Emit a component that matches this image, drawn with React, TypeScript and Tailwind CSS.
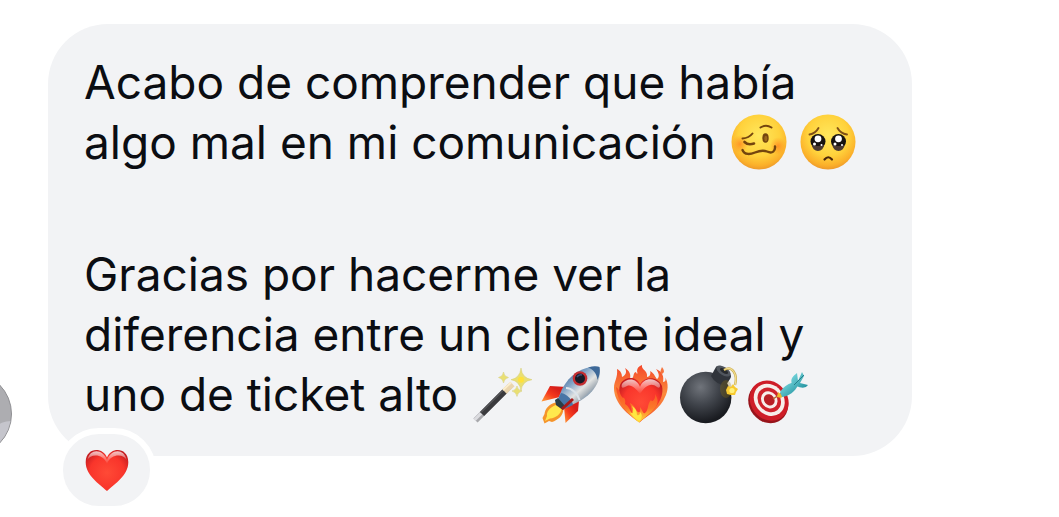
import type { ReactNode } from "react";

interface EmojiProps {
  label: string;
  children: ReactNode;
}

// Base de cada emoji
function Emoji({ label, children }: EmojiProps) {
  return (
    <svg
      role="img"
      aria-label={label}
      viewBox="0 0 60 60"
      className="size-15 shrink-0 overflow-visible"
      fill="none"
    >
      {children}
    </svg>
  );
}

// Degradados compartidos
function Gradients() {
  return (
    <svg className="absolute size-0" aria-hidden="true">
      <defs>
        <radialGradient id="face" cx="0.5" cy="0.38" r="0.62">
          <stop offset="0" stopColor="#ffe75c" />
          <stop offset="0.6" stopColor="#ffd23c" />
          <stop offset="0.88" stopColor="#fbb02a" />
          <stop offset="1" stopColor="#ee9a2b" />
        </radialGradient>
        <radialGradient id="blush">
          <stop offset="0" stopColor="#ff7a1c" stopOpacity="0.7" />
          <stop offset="1" stopColor="#ff8a1c" stopOpacity="0" />
        </radialGradient>
        <radialGradient id="heart" cx="0.5" cy="0.55" r="0.62">
          <stop offset="0" stopColor="#ff4a36" />
          <stop offset="0.65" stopColor="#f9352b" />
          <stop offset="1" stopColor="#c41c20" />
        </radialGradient>
        <linearGradient id="shine" x1="0" y1="0" x2="0" y2="1">
          <stop offset="0" stopColor="#fff" stopOpacity="0.75" />
          <stop offset="1" stopColor="#fff" stopOpacity="0" />
        </linearGradient>
        <linearGradient id="flame" x1="0" y1="0" x2="0" y2="1">
          <stop offset="0" stopColor="#f4472a" />
          <stop offset="0.5" stopColor="#fb8a3c" />
          <stop offset="1" stopColor="#f5542d" />
        </linearGradient>
        <linearGradient id="fire" x1="0" y1="0" x2="0" y2="1">
          <stop offset="0" stopColor="#f94a24" />
          <stop offset="0.6" stopColor="#fb7a2a" />
          <stop offset="1" stopColor="#ffe13f" />
        </linearGradient>
        <linearGradient id="fin" x1="1" y1="0" x2="0" y2="1">
          <stop offset="0.3" stopColor="#d81f1a" />
          <stop offset="0.6" stopColor="#f6391d" />
          <stop offset="1" stopColor="#ffa13a" />
        </linearGradient>
        <linearGradient id="hull" x1="0.2" y1="0.2" x2="0.75" y2="0.8">
          <stop offset="0" stopColor="#486f9d" />
          <stop offset="0.3" stopColor="#82a4c6" />
          <stop offset="0.6" stopColor="#e2e3e2" />
          <stop offset="0.8" stopColor="#a7b0b8" />
          <stop offset="1" stopColor="#4f7ba8" />
        </linearGradient>
        <radialGradient id="bomb" cx="0.4" cy="0.3" r="0.68">
          <stop offset="0" stopColor="#70747b" />
          <stop offset="0.5" stopColor="#41454c" />
          <stop offset="1" stopColor="#191b20" />
        </radialGradient>
        <linearGradient id="dart" x1="0" y1="0" x2="1" y2="1">
          <stop offset="0" stopColor="#7fdde3" />
          <stop offset="1" stopColor="#1f8f9c" />
        </linearGradient>
      </defs>
    </svg>
  );
}

function WoozyFace() {
  return (
    <Emoji label="Cara de grogui">
      <circle cx="30" cy="30" r="27.5" fill="url(#face)" />
      <ellipse cx="49" cy="34" rx="8" ry="9" fill="url(#blush)" />
      <ellipse cx="11" cy="32" rx="8" ry="9" fill="url(#blush)" />
      <g stroke="#74450e" strokeWidth="2" strokeLinecap="round" strokeLinejoin="round">
        <path d="M13.5 26.5Q20 26 23.5 21.5" />
        <path d="M15.5 30Q19 33.5 25 31.5" strokeWidth="2.6" />
        <path d="M31.5 15.5Q37 12 42.5 15.5" />
        <path d="M13.5 38C15.5 43 21 42.5 26 40.5C32 38 34.5 38 38 39.5C43.5 42 46.5 39 46 34.5" strokeWidth="2.4" />
      </g>
      <ellipse cx="36.5" cy="26" rx="3.2" ry="4.7" fill="#74450e" />
      <ellipse cx="36.8" cy="26.5" rx="1.5" ry="2.8" fill="#9a671c" />
    </Emoji>
  );
}

function PleadingFace() {
  return (
    <Emoji label="Cara de súplica">
      <circle cx="30" cy="30" r="27.5" fill="url(#face)" />
      <g stroke="#805017" strokeWidth="1.9" strokeLinecap="round">
        <path d="M11.5 22.5Q17.5 21.5 20.5 16" />
        <path d="M49 22.5Q42.5 21.5 39.5 16" />
        <path d="M26.5 47.5Q30.3 43 34 47.5" stroke="#4a2508" strokeWidth="2.2" />
      </g>
      {[20, 40.5].map((x) => (
        <g key={x}>
          <circle cx={x} cy="29.5" r="7.5" fill="#171311" />
          <path d={`M${x - 6} 33a6 6 0 0 0 12 0q-6 2-12 0z`} fill="#4b3a32" />
          <circle cx={x} cy="26.8" r="3.4" fill="#fff" />
          <circle cx={x - 3.5} cy="32" r="1.5" fill="#fff" />
          <circle cx={x + 3.5} cy="33" r="1" fill="#fff" />
        </g>
      ))}
    </Emoji>
  );
}

function MagicWand() {
  return (
    <Emoji label="Varita mágica">
      <path d="M4.5 56.5L39.5 21.5" stroke="#a8a8ac" strokeWidth="6" />
      <path d="M3.5 56L12 47.5" stroke="#dcdce0" strokeWidth="3" />
      <path d="M11 50L34 27" stroke="#3a3a3d" strokeWidth="6" />
      <path d="M10 48.5L33 25.5" stroke="#68686b" strokeWidth="1" />
      <path d="M33.5 27.5L41.5 20" stroke="#ead5ad" strokeWidth="6" />
      <path d="M32 26L40 18.5" stroke="#fbedcc" strokeWidth="2" />
      <g fill="#e9df72" stroke="#d5cc76" strokeWidth="0.5">
        <path d="M50 4Q51 14.2 61 15.7Q51 17 50 27Q48.8 17 40 15.7Q48.8 14.2 50 4Z" />
        <path d="M32.5 8Q33 12.5 37.5 13.5Q33 14.5 32.5 19Q32 14.5 27.5 13.5Q32 12.5 32.5 8Z" />
        <path d="M46 22Q46.5 26.2 51 27Q46.5 28 46 32.5Q45.3 28 41 27Q45.3 26.2 46 22Z" />
      </g>
      <circle cx="50" cy="15.7" r="3" fill="#ffe13a" />
    </Emoji>
  );
}

function Rocket() {
  return (
    <Emoji label="Cohete">
      <path d="M27 23L10 22L1.5 37.5L20 33Z" fill="url(#fin)" />
      <path d="M39 36.5L38 47L25.5 59L24 43Z" fill="url(#fin)" />
      <path d="M15.5 38.5C9 40 5 45 4.5 50L2.5 54L4.5 59.5L9 57L12 58C18 56 23 52 23.5 45Z" fill="#f5942b" />
      <path d="M15.5 41C9 44 6.5 48 7 52L5 57L10 54.5C16 54 21 50 21.5 45Z" fill="#ffe84d" />
      <path d="M58.5 2.5C43 2 30 10 22 25L17 37.5L23.5 45L38 38C53 30 62 17 59.5 3.5Z" fill="url(#hull)" />
      <path d="M59.5 3C54 1.5 50 3 48 3.8C53 5 57 10 57.5 16C60.5 10 60 6 59.5 3Z" fill="#3d6898" />
      <path d="M21 29C27 30 32 35 33 41L24 45L16.5 38Z" fill="#4775a6" />
      <path d="M26 24C32 24 38 30 39.5 36" stroke="#dce4eb" strokeWidth="2" />
      <path d="M15 36L18 34L25 42L23 46L16 41Z" fill="#2a3e48" />
      <path d="M33 35L22 45" stroke="#a81918" strokeWidth="3" />
      <circle cx="40" cy="14.5" r="7.3" fill="#c52e31" />
      <circle cx="40" cy="14.5" r="5" fill="#171b27" />
      <path d="M37 13Q39 10 42 11" stroke="#3e517a" strokeWidth="1.5" />
    </Emoji>
  );
}

function HeartOnFire() {
  return (
    <Emoji label="Corazón en llamas">
      <path
        d="M30 58C20 51 5 40 5 24C5 17 9 14 8 5C12 7 13 10 13 13C17 11 18 8 16 4C21 7 22 11 21 15C26 15 23 9 27 8C28 11 29 10 28 7C28 4 30 2 33 1C32 6 39 6 38 13C41 13 42 9 41 7C46 10 46 13 48 15C51 13 50 9 47 5C54 8 55 13 54 18C57 18 57 15 56 13C60 19 59 28 56 33C52 43 41 51 30 58Z"
        fill="url(#flame)"
      />
      <path d="M53 3Q57 8 53 10Q50 9 53 3Z" fill="#f6733d" />
      <path
        d="M31 20C27 12 15 12 11 21C7 36 19 48 30.5 58.5C43 48 56 37 53 22C49 12 36 12 31 20Z"
        fill="url(#heart)"
      />
      <path
        d="M31 23C28 14 18 13 13 20C12 23 13 25 16 23C21 19 26 23 31 30C36 22 42 18 48 23C51 25 52 22 50 19C44 13 34 14 31 23Z"
        fill="url(#shine)"
      />
      {/* Llamas laterales y base */}
      <path
        d="M7 23C11 25 10 30 14 34C15 33 17 36 16 40C20 42 21 47 23 49C23 46 22 42 21 39C27 42 26 46 29 48C32 49 31 45 31 43C34 47 34 50 36 49C40 46 38 40 42 36C43 39 47 35 46 30C50 36 49 40 46 44C41 50 35 54 30 58.5C20 51 8 39 7 23Z"
        fill="url(#fire)"
      />
      <path d="M20 47Q22 50 24 49Q25 45 23 42Q28 45 28 51Q31 52 31 48Q35 52 30.5 57Q24 54 20 47Z" fill="#ffe740" />
    </Emoji>
  );
}

function Bomb() {
  return (
    <Emoji label="Bomba">
      <circle cx="27.7" cy="33.5" r="25.7" fill="url(#bomb)" />
      <path d="M39 2L52 10Q54 12 52 15L48 21Q38 21 33 12L38 3Z" fill="#30343b" />
      <ellipse cx="45.5" cy="7" rx="8" ry="4" transform="rotate(32 45.5 7)" fill="#50555d" />
      <ellipse cx="46" cy="7" rx="4.5" ry="2" transform="rotate(32 46 7)" fill="#272a2e" />
      <path d="M46 6C54 1 60 10 57 21" stroke="#c8a94d" strokeWidth="2.4" />
      <path d="M46 6C54 1 60 10 57 21" stroke="#f3df91" strokeWidth="1.2" />
      <ellipse cx="48" cy="25" rx="6" ry="9" fill="#8f7112" opacity="0.3" />
      <path d="M55 20L57 23L60 25L58 28L57 31L53 31L49 30L48 26L50 22L53 23Z" fill="#f7c92f" />
      <circle cx="54" cy="26.5" r="2.6" fill="#fff17a" />
    </Emoji>
  );
}

function Target() {
  return (
    <Emoji label="Diana">
      <g transform="rotate(-38 22 38)">
        <ellipse cx="21" cy="38" rx="19" ry="21.5" fill="#97141b" />
        <ellipse cx="23" cy="37" rx="18.5" ry="21" fill="#ce1d27" />
        <ellipse cx="23.5" cy="36.5" rx="14.5" ry="17" fill="#f7eeea" />
        <ellipse cx="23.5" cy="36.5" rx="11" ry="13" fill="#cf222b" />
        <ellipse cx="23.5" cy="36.5" rx="7.8" ry="9" fill="#f7eeea" />
        <ellipse cx="23.5" cy="36.5" rx="5" ry="6" fill="#b91f25" />
      </g>
      <path d="M26 35L35 29" stroke="#b1662b" strokeWidth="1.5" />
      <path d="M31 28L36 32L34 34L30 33Z" fill="#f0b72c" />
      <path d="M33 28C37 22 42 19 48 18L51 21C48 28 42 32 35 33Z" fill="url(#dart)" />
      <path d="M45 20C43 15 46 12 50 9L51 17L55 8L57 12L53 19L61 21Q58 26 49 22Z" fill="url(#dart)" />
      <path d="M47 21L57 11" stroke="#277f89" strokeWidth="1" />
    </Emoji>
  );
}

function RedHeart() {
  return (
    <svg viewBox="0 0 44 44" className="size-11" aria-hidden="true">
      <path
        d="M22 9.5C18-1 1-1 .7 14C.5 27 14 36 22 43C30 36 43.5 27 43.3 14C43-1 26-1 22 9.5Z"
        fill="url(#heart)"
      />
      <path
        d="M22 12C18 1 5 0 2.5 12C5 6 18 5 22 16C26 5 39 6 41.5 12C39 0 26 1 22 12Z"
        fill="url(#shine)"
      />
    </svg>
  );
}

export default function App() {
  return (
    <main className="relative w-full overflow-hidden bg-white pt-6 pr-[147px] pb-15 font-['Inter','Liberation_Sans',sans-serif]">
      <Gradients />
      <div className="flex items-end gap-9">
        {/* Avatar */}
        <div className="-ml-18 size-21 shrink-0 overflow-hidden rounded-full border border-[#8f8f93] bg-[#adadb1]">
          <div className="mt-12 ml-auto h-9 w-6 rounded-tl-full bg-[#c5c5cc]"></div>
        </div>
        {/* Mensaje */}
        <article className="relative flex-1 rounded-[60px] bg-[#f2f3f5] px-9 pt-7 pb-8 text-[46px] leading-[60px] text-[#0b0d12]">
          <p>
            Acabo de comprender que había algo mal en mi comunicación{" "}
            <span className="inline-flex gap-[9px] align-top">
              <WoozyFace />
              <PleadingFace />
            </span>
          </p>
          <p className="mt-18">
            Gracias por hacerme ver la diferencia entre un cliente ideal y uno
            de ticket alto{" "}
            <span className="inline-flex gap-[9px] align-top">
              <MagicWand />
              <Rocket />
              <HeartOnFire />
              <Bomb />
              <Target />
            </span>
          </p>
          {/* Reacción */}
          <button
            aria-label="Me encanta"
            className="absolute -bottom-14 left-[9px] flex h-[84px] w-[99px] items-center justify-center rounded-[42px] border-6 border-white bg-[#f2f3f5]"
          >
            <RedHeart />
          </button>
        </article>
      </div>
    </main>
  );
}
